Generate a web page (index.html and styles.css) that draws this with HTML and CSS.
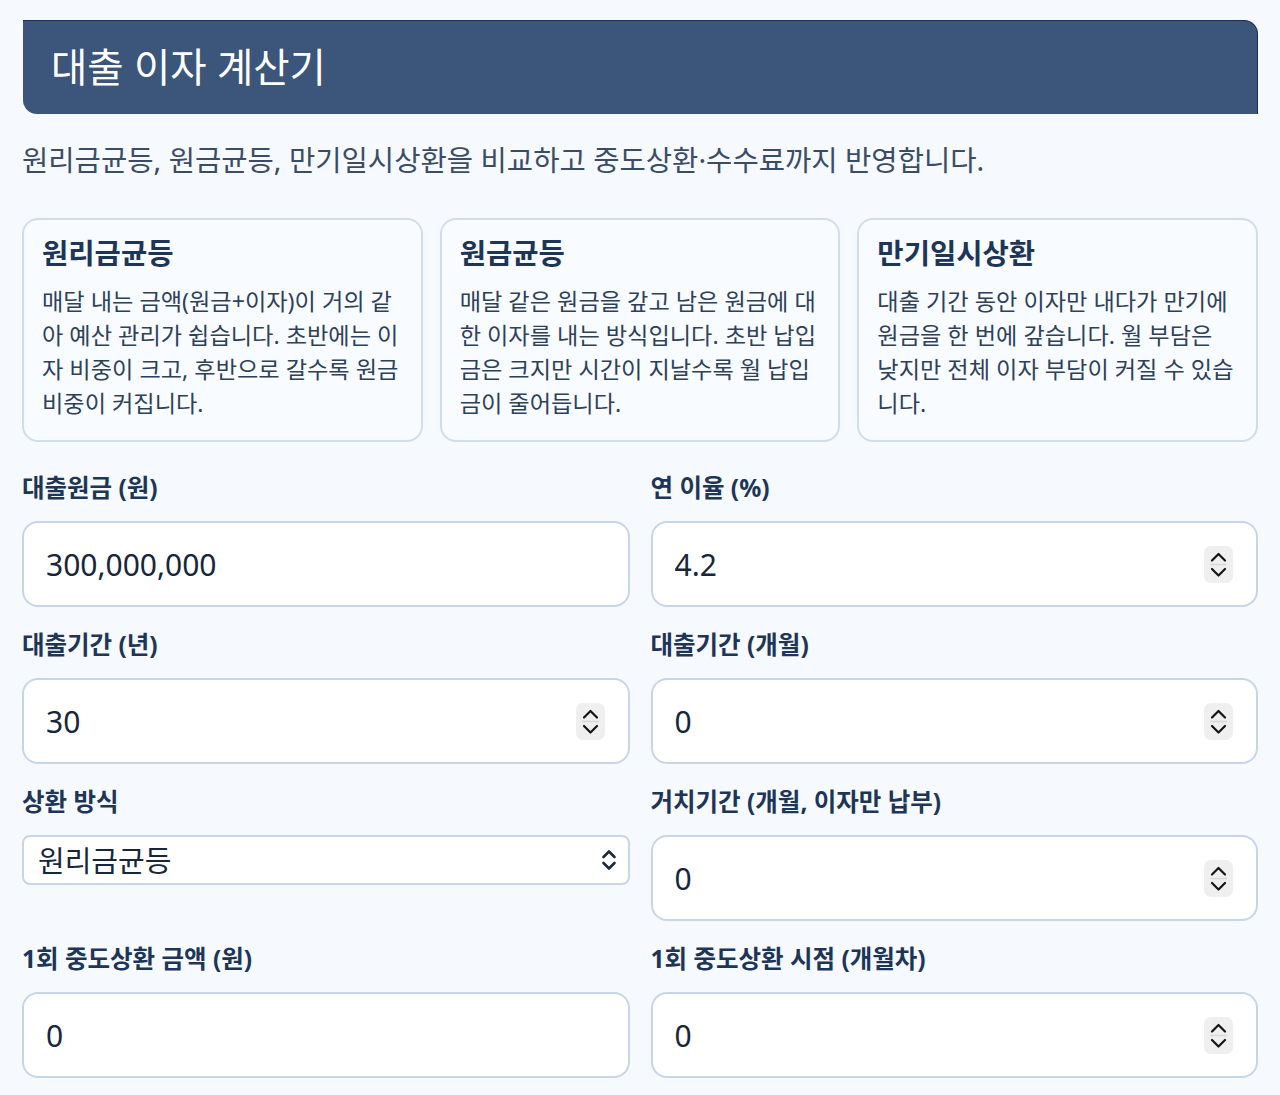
FILE: index.html
```html
<!doctype html>
<html lang="ko">
    <head>
        <meta charset="utf-8">
        <title>대출 이자 계산기</title>
        <link rel="stylesheet" href="styles.css">
    </head>
    <body>
        <div class="page">
            <header class="title-bar">
                <h1>대출 이자 계산기</h1>
            </header>
            <p class="intro">원리금균등, 원금균등, 만기일시상환을 비교하고 중도상환·수수료까지 반영합니다.</p>

            <div class="cards">
                <div class="card">
                    <h2>원리금균등</h2>
                    <p>매달 내는 금액(원금+이자)이 거의 같아 예산 관리가 쉽습니다. 초반에는 이자 비중이 크고, 후반으로 갈수록 원금 비중이 커집니다.</p>
                </div>
                <div class="card">
                    <h2>원금균등</h2>
                    <p>매달 같은 원금을 갚고 남은 원금에 대한 이자를 내는 방식입니다. 초반 납입금은 크지만 시간이 지날수록 월 납입금이 줄어듭니다.</p>
                </div>
                <div class="card">
                    <h2>만기일시상환</h2>
                    <p>대출 기간 동안 이자만 내다가 만기에 원금을 한 번에 갚습니다. 월 부담은 낮지만 전체 이자 부담이 커질 수 있습니다.</p>
                </div>
            </div>

            <form class="fields">
                <div class="field">
                    <label>대출원금 (원)</label>
                    <div class="box"><input type="text" value="300,000,000"></div>
                </div>
                <div class="field">
                    <label>연 이율 (%)</label>
                    <div class="box">
                        <input type="text" value="4.2">
                        <svg class="spin" width="29" height="37" viewBox="0 0 29 37"><rect width="29" height="37" rx="7" fill="#efefef"/><path d="M6 18.5H23" stroke="#d9d9d9" stroke-width="1.5"/><path d="M8 14.5L14.5 8L21 14.5M8 23L14.5 29.5L21 23" fill="none" stroke="#151515" stroke-width="2.2" stroke-linecap="round" stroke-linejoin="round"/></svg>
                    </div>
                </div>
                <div class="field">
                    <label>대출기간 (년)</label>
                    <div class="box">
                        <input type="text" value="30">
                        <svg class="spin" width="29" height="37" viewBox="0 0 29 37"><rect width="29" height="37" rx="7" fill="#efefef"/><path d="M6 18.5H23" stroke="#d9d9d9" stroke-width="1.5"/><path d="M8 14.5L14.5 8L21 14.5M8 23L14.5 29.5L21 23" fill="none" stroke="#151515" stroke-width="2.2" stroke-linecap="round" stroke-linejoin="round"/></svg>
                    </div>
                </div>
                <div class="field">
                    <label>대출기간 (개월)</label>
                    <div class="box">
                        <input type="text" value="0">
                        <svg class="spin" width="29" height="37" viewBox="0 0 29 37"><rect width="29" height="37" rx="7" fill="#efefef"/><path d="M6 18.5H23" stroke="#d9d9d9" stroke-width="1.5"/><path d="M8 14.5L14.5 8L21 14.5M8 23L14.5 29.5L21 23" fill="none" stroke="#151515" stroke-width="2.2" stroke-linecap="round" stroke-linejoin="round"/></svg>
                    </div>
                </div>
                <div class="field">
                    <label>상환 방식</label>
                    <div class="select-box">
                        <select>
                            <option>원리금균등</option>
                            <option>원금균등</option>
                            <option>만기일시상환</option>
                        </select>
                        <svg class="caret" width="18" height="26" viewBox="0 0 18 26"><path d="M3.5 10L9 4.5L14.5 10M3.5 16L9 21.5L14.5 16" fill="none" stroke="#1b2a3d" stroke-width="2.6" stroke-linecap="round" stroke-linejoin="round"/></svg>
                    </div>
                </div>
                <div class="field">
                    <label>거치기간 (개월, 이자만 납부)</label>
                    <div class="box">
                        <input type="text" value="0">
                        <svg class="spin" width="29" height="37" viewBox="0 0 29 37"><rect width="29" height="37" rx="7" fill="#efefef"/><path d="M6 18.5H23" stroke="#d9d9d9" stroke-width="1.5"/><path d="M8 14.5L14.5 8L21 14.5M8 23L14.5 29.5L21 23" fill="none" stroke="#151515" stroke-width="2.2" stroke-linecap="round" stroke-linejoin="round"/></svg>
                    </div>
                </div>
                <div class="field">
                    <label>1회 중도상환 금액 (원)</label>
                    <div class="box"><input type="text" value="0"></div>
                </div>
                <div class="field">
                    <label>1회 중도상환 시점 (개월차)</label>
                    <div class="box">
                        <input type="text" value="0">
                        <svg class="spin" width="29" height="37" viewBox="0 0 29 37"><rect width="29" height="37" rx="7" fill="#efefef"/><path d="M6 18.5H23" stroke="#d9d9d9" stroke-width="1.5"/><path d="M8 14.5L14.5 8L21 14.5M8 23L14.5 29.5L21 23" fill="none" stroke="#151515" stroke-width="2.2" stroke-linecap="round" stroke-linejoin="round"/></svg>
                    </div>
                </div>
            </form>
        </div>
    </body>
</html>
```

FILE: styles.css
```css
* {
    box-sizing: border-box;
}

body {
    margin: 0;
    background: #f6f9fd;
    font-family: "Noto Sans", "Noto Sans CJK KR", sans-serif;
    color: #1e3a5f;
}

.page {
    padding: 20px 22px 40px 22px;
}

.title-bar {
    background: #3c557b;
    border-top: 1px solid #16305a;
    border-right: 1px solid #16305a;
    border-radius: 0 14px 0 14px;
    margin-left: 1px;
    padding: 21px 28px 22px 28px;
}

.title-bar h1 {
    margin: 0;
    color: #fff;
    font-size: 39.5px;
    font-weight: 400;
    line-height: 50px;
}

.intro {
    margin: 26px 0 38px 0;
    font-size: 28.6px;
    line-height: 40px;
    color: #3b4d66;
}

.cards {
    display: grid;
    grid-template-columns: repeat(3, 1fr);
    gap: 17px;
}

.card {
    border: 2px solid #d0ddee;
    border-radius: 16px;
    background: #f8fbff;
    padding: 15px 18px 20px 18px;
}

.card h2 {
    margin: 0 0 13px 0;
    font-size: 28.6px;
    font-weight: 700;
    line-height: 36px;
    color: #1d3658;
}

.card p {
    margin: 0;
    font-size: 23.2px;
    line-height: 34px;
    color: #2e4159;
    word-break: break-all;
    line-break: anywhere;
}

.fields {
    display: grid;
    grid-template-columns: 1fr 1fr;
    column-gap: 21px;
    row-gap: 22px;
    margin-top: 30px;
    align-items: start;
}

.field label {
    display: block;
    font-size: 24.5px;
    font-weight: 700;
    line-height: 32px;
    margin-bottom: 17px;
    color: #1d3658;
}

.box {
    display: flex;
    align-items: center;
    height: 86px;
    padding: 0 22px;
    background: #fff;
    border: 2px solid #c7d5e8;
    border-radius: 16px;
}

.box input,
.select-box select {
    flex: 1;
    min-width: 0;
    border: none;
    outline: none;
    background: transparent;
    padding: 0;
    font-family: "Noto Sans", "Noto Sans CJK KR", sans-serif;
    color: #17263a;
}

.box input {
    font-size: 30px;
}

.spin {
    flex: none;
    margin-right: 1px;
}

.select-box {
    display: flex;
    align-items: center;
    height: 50px;
    padding: 0 10px 0 14px;
    background: #fff;
    border: 2px solid #c9d6e8;
    border-radius: 8px;
}

.select-box select {
    -webkit-appearance: none;
    appearance: none;
    font-size: 29px;
}

.caret {
    flex: none;
}
```
